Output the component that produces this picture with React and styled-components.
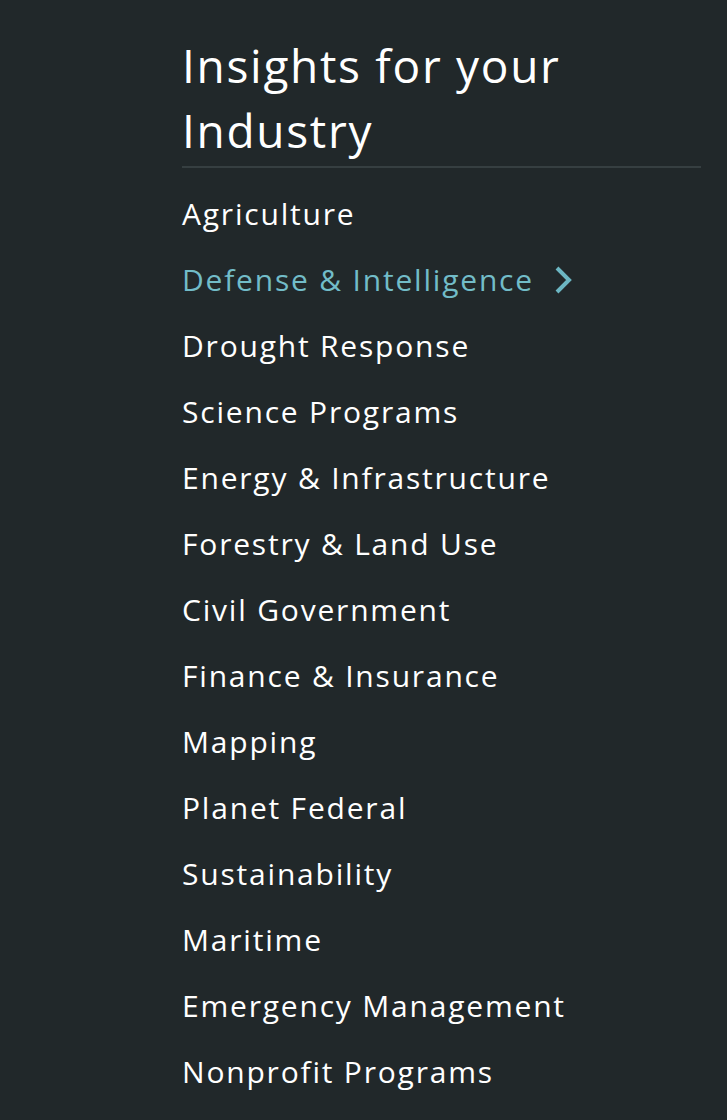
import React from "react";
import styled, { createGlobalStyle } from "styled-components";

const GlobalStyle = createGlobalStyle`
  html, body {
    margin: 0;
    padding: 0;
    background: #21282a;
  }
  body {
    font-family: "Open Sans", "Liberation Sans", sans-serif;
  }
`;

const industries = [
  "Agriculture",
  "Defense & Intelligence",
  "Drought Response",
  "Science Programs",
  "Energy & Infrastructure",
  "Forestry & Land Use",
  "Civil Government",
  "Finance & Insurance",
  "Mapping",
  "Planet Federal",
  "Sustainability",
  "Maritime",
  "Emergency Management",
  "Nonprofit Programs",
];

const Page = styled.div`
  min-height: 1120px;
  background: #21282a;
  padding: 33px 26px 0 182px;
  box-sizing: border-box;
`;

const Heading = styled.h2`
  margin: 0;
  padding-bottom: 3px;
  font-size: 46px;
  font-weight: 400;
  line-height: 65px;
  letter-spacing: 1.7px;
  color: #ffffff;
  border-bottom: 2px solid #363f41;
  width: 519px;
`;

const List = styled.ul`
  list-style: none;
  margin: 13px 0 0;
  padding: 0;
`;

const Item = styled.li`
  height: 66px;
  line-height: 66px;
  display: flex;
  align-items: center;
  gap: 20px;
  font-size: 30px;
  letter-spacing: 1.8px;
  color: ${(p) => (p.$active ? "#72bcc8" : "#ffffff")};
  cursor: pointer;
`;

const Chevron = () => (
  <svg width="18" height="28" viewBox="0 0 18 28" fill="none">
    <path d="M3 2l12 12-12 12" stroke="#6cb7c3" strokeWidth="4" />
  </svg>
);

export default function App() {
  return (
    <>
      <GlobalStyle />
      <Page>
        <Heading>Insights for your Industry</Heading>
        <List>
          {industries.map((name, i) => (
            <Item key={name} $active={i === 1}>
              {name}
              {i === 1 && <Chevron />}
            </Item>
          ))}
        </List>
      </Page>
    </>
  );
}
